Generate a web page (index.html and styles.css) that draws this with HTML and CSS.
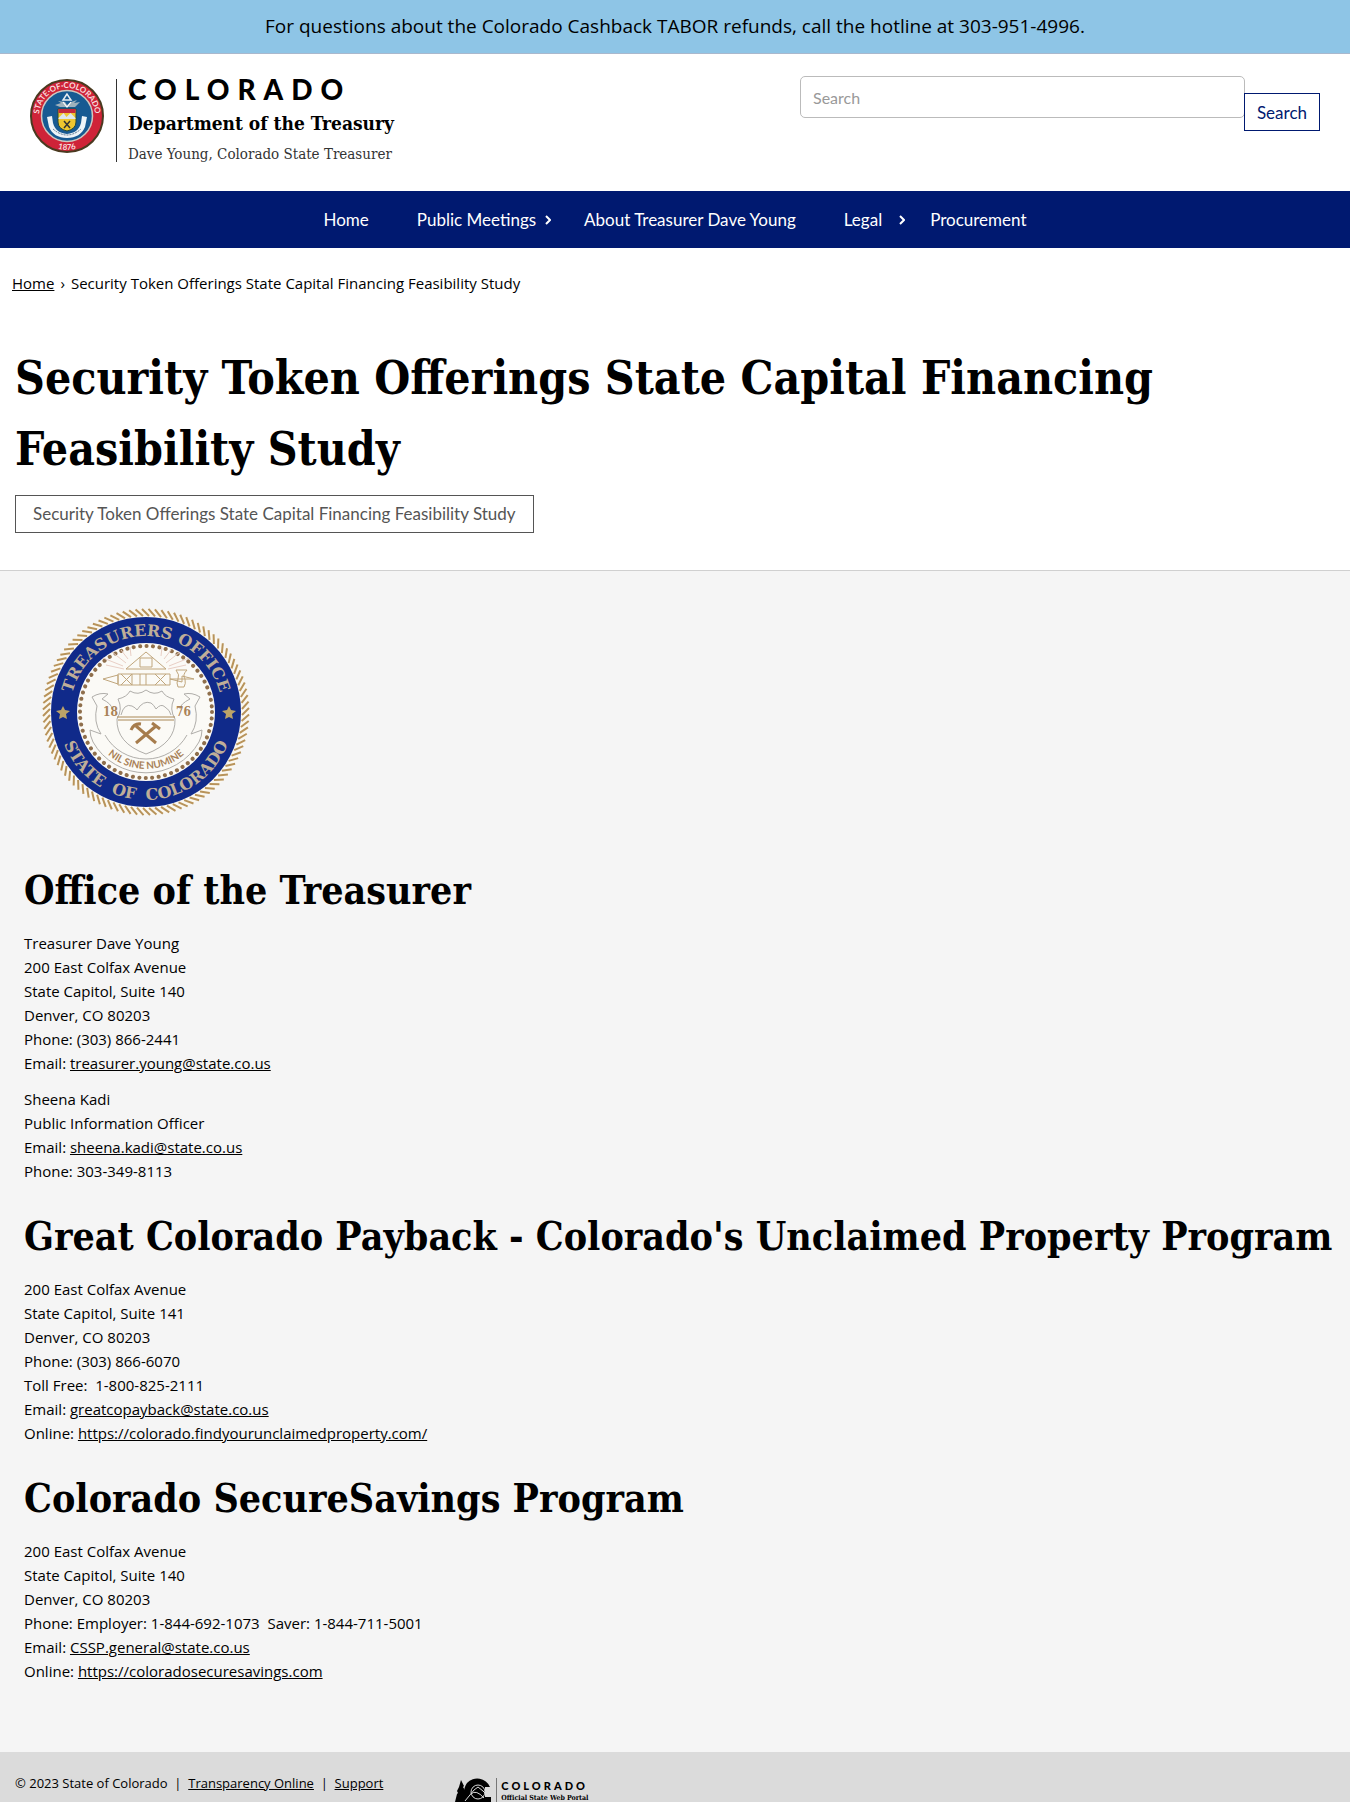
FILE: index.html
```html
<!DOCTYPE html>
<html lang="en">
<head>
<meta charset="utf-8">
<meta name="viewport" content="width=device-width, initial-scale=1">
<title>Security Token Offerings State Capital Financing Feasibility Study</title>
<link rel="stylesheet" href="styles.css">
</head>
<body>
<p class="notice">For questions about the Colorado Cashback TABOR refunds, call the hotline at 303-951-4996.</p>
<header class="site-header">
  <div class="brand">
    <svg class="brand-seal" viewBox="0 0 74 74" width="74" height="74" aria-hidden="true">
      <defs>
        <path id="state-top" d="M9 37a28 28 0 0 1 56 0"/>
        <path id="state-bottom" d="M3 37a34 34 0 0 0 68 0"/>
      </defs>
      <circle cx="37" cy="37" r="36" fill="#cf2338" stroke="#4a3a20" stroke-width="2"/>
      <circle cx="37" cy="37" r="25.500" fill="#175a92" stroke="#cfc8c0" stroke-width="1.500"/>
      <text class="state-ring" text-anchor="middle"><textPath href="#state-top" startOffset="50%">STATE·OF·COLORADO</textPath></text>
      <text class="state-ring" text-anchor="middle"><textPath href="#state-bottom" startOffset="50%">1876</textPath></text>
      <path d="M37 15l-4 6h8z" fill="none" stroke="#e8edf2" stroke-width="1.500"/>
      <path d="M25 26l6-2-3-2 7 1 2 3 4-3 6-2-3 3 6-1-5 5H30z" fill="#9fb2bd"/>
      <path d="M33 23l4 5 4-5" fill="none" stroke="#fff" stroke-width="1.200"/>
      <path d="M28 30h18v13q0 7-9 9q-9-2-9-9z" fill="#efc62f" stroke="#274a38"/>
      <path d="M28.500 30h17v4h-17z" fill="#c52a3c"/>
      <path d="M28.500 39l5-5 3 4 4-4 5 5v1h-17z" fill="#dfe8ec"/>
      <path d="M34 42l6 7m0-7l-6 7" stroke="#333" stroke-width="1.500"/>
      <path d="M17 38l5-1 1 7c2 7 6 10 14 11 8-1 12-4 14-11l1-7 5 1-2 10c-3 7-9 11-18 11s-15-4-18-11z" fill="#eef4f8"/>
      <path d="M23 50q14 12 28 0" fill="none" stroke="#54718b" stroke-dasharray="2 1"/>
    </svg>
    <div class="brand-text">
      <span class="brand-state">COLORADO</span>
      <span class="brand-dept">Department of the Treasury</span>
      <span class="brand-person">Dave Young, Colorado State Treasurer</span>
    </div>
  </div>
  <form class="search" role="search">
    <input class="search-input" type="search" placeholder="Search" aria-label="Search">
    <button class="search-button" type="submit">Search</button>
  </form>
</header>
<nav class="main-nav" aria-label="Main">
  <ul class="nav-list">
    <li><a href="#">Home</a></li>
    <li class="has-menu"><a href="#">Public Meetings</a><svg class="chevron" viewBox="0 0 6 10" width="6" height="10" aria-hidden="true"><path d="M1 1l4 4-4 4"/></svg></li>
    <li><a href="#">About Treasurer Dave Young</a></li>
    <li class="has-menu short"><a href="#">Legal</a><svg class="chevron" viewBox="0 0 6 10" width="6" height="10" aria-hidden="true"><path d="M1 1l4 4-4 4"/></svg></li>
    <li><a href="#">Procurement</a></li>
  </ul>
</nav>
<nav class="breadcrumb" aria-label="Breadcrumb"><a href="#">Home</a><span>›</span>Security Token Offerings State Capital Financing Feasibility Study</nav>
<main class="content">
  <h1>Security Token Offerings State Capital Financing Feasibility Study</h1>
  <a class="outline-link" href="#">Security Token Offerings State Capital Financing Feasibility Study</a>
</main>
<section class="contacts">
  <svg class="office-seal" viewBox="0 0 208 208" width="208" height="208" role="img" aria-label="Treasurers Office, State of Colorado">
    <defs>
      <path id="office-top" d="M28 104a76 76 0 0 1 152 0"/>
      <path id="office-bottom" d="M16 104a88 88 0 0 0 176 0"/>
      <path id="motto" d="M47 104a57 57 0 0 0 114 0"/>
    </defs>
    <circle cx="104" cy="104" r="99" fill="none" stroke="#fbf8f0" stroke-width="8"/>
    <g class="rope" id="rope"></g>
    <circle cx="104" cy="104" r="95" fill="#102a8a"/>
    <circle cx="104" cy="104" r="69" fill="#fbfaf6"/>
    <circle cx="104" cy="104" r="66" fill="none" stroke="#8f6f4c" stroke-width="4" stroke-linecap="round" stroke-dasharray="0.100 6.380"/>
    <text class="office-ring" text-anchor="middle"><textPath href="#office-top" startOffset="50%">TREASURERS OFFICE</textPath></text>
    <text class="office-ring" text-anchor="middle"><textPath href="#office-bottom" startOffset="50%">STATE &nbsp;OF &nbsp;COLORADO</textPath></text>
    <path id="star" d="M21 98l2 4 5 1-4 3 1 5-4-2-4 2 1-5-4-3 5-1z" fill="#bda468"/>
    <use href="#star" x="166"/>
    <g fill="none" stroke="#c0a67c" stroke-width="1">
      <path d="M104 44L84 61h40zM98 50h12v9H98zM61 71l15-4v9zM76 66h52v11H76zM79 66l11 11m0-11L79 77m19-11v11m6-11v11m9-11l11 11m0-11l-11 11M90 66v11m38-6l24 0-12-3v6z"/>
      <path d="M134 62h11q-5 5-2 9 1 5-1 8h-6q-2-4 0-8 2-4-2-9z"/>
      <path d="M82 61L64 57m17 1L61 50m23 5L70 44m16 7l-7-9m10 6l-1-9m38 22l18-4m-17 1l20-8m-23 5l14-11m-16 7l7-9m-10 6l1-9" stroke="#e9cfc5"/>
    </g>
    <g fill="none" stroke="#b0aeaa" stroke-width="1">
      <path d="M76 91q9-2 12-8 8 5 16-1 8 6 16 1 3 6 12 8-5 10 1 20 1 24-29 35-30-11-29-35 6-10 1-20z"/>
      <path d="M79 107q3-12 11-9 4 2 5 4 6-10 14-7 3 2 5 6 5-6 9-2 5 3 6 8"/>
      <path d="M50 89q8-5 16-3l-6 5q10 5 10 10m-20-12l5 9q-4 16 4 28l-11-4q0 6 3 12m107-45q-8-5-16-3l6 5q-10 5-10 10m20-12l-5 9q4 16-4 28l11-4q0 6-3 12M51 134a61 61 0 0 0 106 0M63 127a47 47 0 0 0 82 0"/>
    </g>
    <path d="M75 109h58M76 112h56" stroke="#a98856" stroke-width="1"/>
    <path d="M94 135l20-17m0 17l-20-17m-5 4q3-7 10-6m11-1l8 6" fill="none" stroke="#a67c4c" stroke-width="3"/>
    <text class="seal-year" x="61" y="108">18</text>
    <text class="seal-year" x="134" y="108">76</text>
    <text class="seal-motto" text-anchor="middle"><textPath href="#motto" startOffset="50%">NIL SINE NUMINE</textPath></text>
  </svg>
  <h2>Office of the Treasurer</h2>
  <p>Treasurer Dave Young<br>200 East Colfax Avenue<br>State Capitol, Suite 140<br>Denver, CO 80203<br>Phone: (303) 866-2441<br>Email: <a href="mailto:treasurer.young@state.co.us">treasurer.young@state.co.us</a></p>
  <p>Sheena Kadi<br>Public Information Officer<br>Email: <a href="mailto:sheena.kadi@state.co.us">sheena.kadi@state.co.us</a><br>Phone: 303-349-8113</p>
  <h2>Great Colorado Payback - Colorado's Unclaimed Property Program</h2>
  <p>200 East Colfax Avenue<br>State Capitol, Suite 141<br>Denver, CO 80203<br>Phone: (303) 866-6070<br>Toll Free:&nbsp; 1-800-825-2111<br>Email: <a href="mailto:greatcopayback@state.co.us">greatcopayback@state.co.us</a><br>Online: <a href="#">https://colorado.findyourunclaimedproperty.com/</a></p>
  <h2>Colorado SecureSavings Program</h2>
  <p>200 East Colfax Avenue<br>State Capitol, Suite 140<br>Denver, CO 80203<br>Phone: Employer: 1-844-692-1073&nbsp; Saver: 1-844-711-5001<br>Email: <a href="mailto:CSSP.general@state.co.us">CSSP.general@state.co.us</a><br>Online: <a href="#">https://coloradosecuresavings.com</a></p>
</section>
<footer class="site-footer">
  <p class="legal">© 2023 State of Colorado&nbsp; |&nbsp; <a href="#">Transparency Online</a>&nbsp; |&nbsp; <a href="#">Support</a></p>
  <div class="portal">
    <svg class="portal-mark" viewBox="0 0 36 24" width="36" height="24" aria-hidden="true">
      <path d="M6 2l3 6-1 1 3 5-1 1 3 9H0l2-8 1-1-1-2 2-4z"/>
      <path d="M35 9A14 14 0 0 0 12 5Q9 9 9 15q0 5 3 9h24v-5h-6V9z"/>
      <circle cx="23" cy="14" r="7" fill="none" stroke="#dbdbdb"/>
      <path d="M10 23l9-11 4-3 5 4 3 3M16 16q5-5 13 4" fill="none" stroke="#dbdbdb"/>
    </svg>
    <div class="portal-text"><span class="portal-state">COLORADO</span><span class="portal-name">Official State Web Portal</span></div>
  </div>
</footer>
<script src="seal.js"></script>
</body>
</html>
```
FILE: seal.js
```js
// Twisted rope around the rim of the office seal.
const rope = document.getElementById("rope");
for (let i = 0; i < 100; i++) {
  const strand = document.createElementNS("http://www.w3.org/2000/svg", "path");
  strand.setAttribute("d", "M100 1L107 8");
  strand.setAttribute("transform", `rotate(${i * 3.6} 104 104)`);
  rope.append(strand);
}
```
FILE: styles.css
```css
* { box-sizing: border-box; }
body { margin: 0; background: #fff; color: #000; font: 15px/24px "Open Sans", sans-serif; }
a { color: inherit; }
.notice { margin: 0; padding: 14px; border-bottom: 1px solid #a9b8cd; background: #8ec5e6; font-size: 19px; line-height: 25px; text-align: center; }
.site-header { display: flex; justify-content: space-between; align-items: flex-start; gap: 24px; padding: 22px 30px 29px; }
.brand { display: flex; align-items: flex-start; gap: 12px; padding-top: 3px; }
.brand-text { display: flex; flex-direction: column; padding-left: 11px; border-left: 1px solid #333; white-space: nowrap; }
.brand-state { font: 900 28px/20px Lato, sans-serif; letter-spacing: 8px; }
.brand-dept { padding-top: 10px; font: bold 19px/28px "DejaVu Serif Condensed", "DejaVu Serif", serif; }
.brand-person { padding-top: 9px; color: #333; font: 15px/16px "DejaVu Serif Condensed", "DejaVu Serif", serif; }
.search { display: flex; align-items: flex-start; flex: 0 1 520px; }
.search-input { flex: 1; min-width: 0; height: 42px; padding: 0 12px; border: 1px solid #bbb; border-radius: 5px; background: #fff; font: 16px Lato, sans-serif; }
.search-input::placeholder { color: #999; }
.search-button { height: 38px; margin: 17px 0 0 -1px; padding: 0 12px; border: 1px solid #001970; background: #fff; color: #001970; font: 17px Lato, sans-serif; }
.main-nav { background: #001970; color: #fff; font: 17px/25px Lato, sans-serif; }
.nav-list { display: flex; justify-content: center; margin: 0; padding: 0; list-style: none; }
.nav-list li { position: relative; }
.nav-list a { display: block; padding: 16px 24px; color: #fff; text-decoration: none; }
.chevron { position: absolute; top: 24px; right: 9px; fill: none; stroke: #fff; stroke-width: 2; }
.short .chevron { right: 1px; }
.breadcrumb { padding: 23px 12px; }
.breadcrumb span { margin: 0 6px; }
.content { padding: 25px 15px 37px; }
h1, h2 { font-family: "DejaVu Serif Condensed", "DejaVu Serif", serif; font-weight: bold; }
h1 { margin: 0 0 10px; font-size: 46px; line-height: 71px; }
.outline-link { display: inline-block; padding: 6px 17px; border: 1px solid #555; color: #555; font: 17px/24px Lato, sans-serif; text-decoration: none; }
.contacts { padding: 37px 15px 57px 24px; border-top: 1px solid #d0d0d0; background: #f5f5f5; }
.office-seal { display: block; margin: 0 0 33px 18px; }
.rope path { fill: none; stroke: #b8935a; stroke-width: 2; }
.state-ring { fill: #f8dede; font: bold 8px Lato, sans-serif; }
.office-ring { fill: #bfae98; font: bold 16px "DejaVu Serif", serif; }
.seal-year { fill: #a98258; font: bold 12px "DejaVu Serif Condensed", serif; }
.seal-motto { fill: #a98258; font: bold 10px Lato, sans-serif; }
h2 { margin: 0; padding: 17px 0; font-size: 39px; line-height: 48px; }
.contacts p { margin: 0 0 12px; }
.site-footer { display: flex; gap: 72px; padding: 0 15px; background: #dbdbdb; }
.legal { margin: 0; padding: 19px 0 7px; font-size: 13px; }
.portal { display: flex; gap: 5px; height: 50px; padding-top: 26px; overflow: hidden; }
.portal-text { display: flex; flex-direction: column; padding-left: 4px; border-left: 1px solid #777; white-space: nowrap; }
.portal-state { font: 900 11px/16px Lato, sans-serif; letter-spacing: 3px; }
.portal-name { font: bold 7px/8px "DejaVu Serif Condensed", serif; }
```
